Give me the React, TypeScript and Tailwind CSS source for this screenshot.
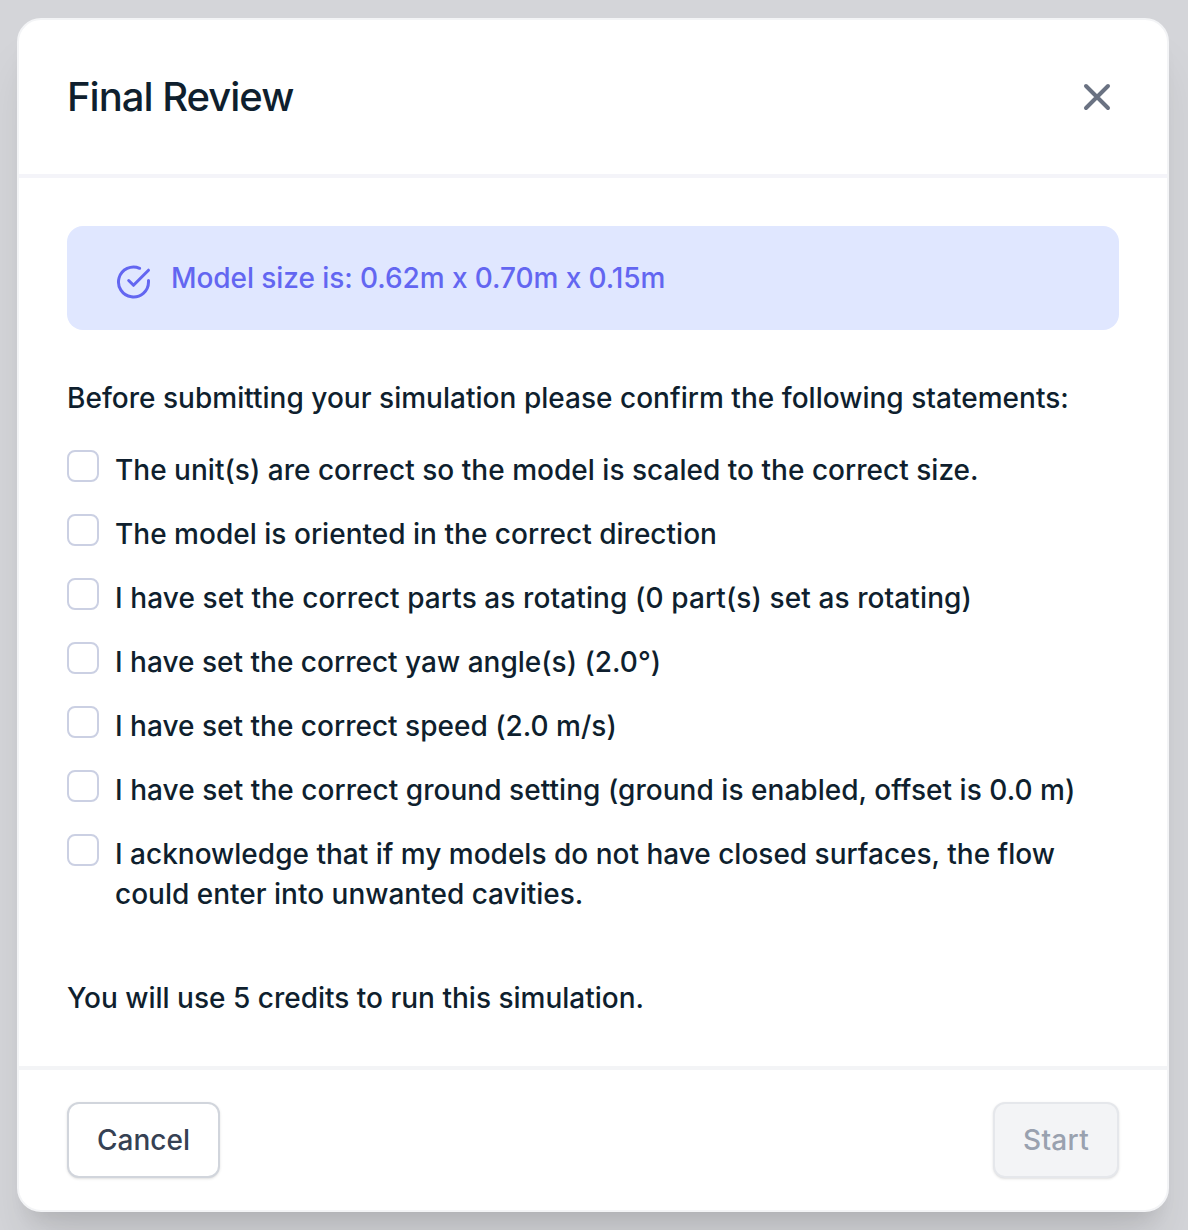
const statements = [
  { text: "The unit(s) are correct so the model is scaled to the correct size.", tracking: "tracking-[0.02px]" },
  { text: "The model is oriented in the correct direction", tracking: "tracking-[0.02px]" },
  { text: "I have set the correct parts as rotating (0 part(s) set as rotating)", tracking: "tracking-[0.1px]" },
  { text: "I have set the correct yaw angle(s) (2.0°)", tracking: "tracking-[0.01px]" },
  { text: "I have set the correct speed (2.0 m/s)", tracking: "tracking-[0.01px]" },
  { text: "I have set the correct ground setting (ground is enabled, offset is 0.0 m)", tracking: "tracking-[0.04px]" },
  {
    text: "I acknowledge that if my models do not have closed surfaces, the flow could enter into unwanted cavities.",
    tracking: "tracking-normal",
  },
];

const Statement = (props: { text: string; tracking: string }) => {
  return (
    <label className="flex items-start gap-4">
      <input
        type="checkbox"
        className="size-8 shrink-0 appearance-none rounded-lg border-2 border-[#cbd0e3] bg-white"
      />
      <span className={`max-w-[980px] leading-10 ${props.tracking}`}>{props.text}</span>
    </label>
  );
};

const App = () => {
  return (
    <div className="h-[1230px] w-[1188px] overflow-hidden bg-[#d4d5d9] px-[17px] pt-[18px] font-['Inter',sans-serif] text-[28px] font-medium tracking-[0.02px] text-[#0f1f2e] [font-variation-settings:'opsz'_14]">
      <section className="flex h-[1194px] w-[1152px] flex-col rounded-3xl border-2 border-[#f3f4f6] bg-white shadow-[0_40px_50px_-10px_rgba(0,0,0,0.1),0_16px_20px_-12px_rgba(0,0,0,0.1)]">
        <header className="flex h-[158px] shrink-0 items-center justify-between border-b-4 border-[#f4f4f9] px-12">
          <h1 className="text-[40px] tracking-[-1px]">Final Review</h1>
          <button aria-label="Close" className="mr-2 text-gray-500">
            <svg width="28" height="28" viewBox="0 0 28 28" fill="none" stroke="currentColor" strokeWidth="4" strokeLinecap="round">
              <path d="M3 3 25 25M25 3 3 25" />
            </svg>
          </button>
        </header>
        <main className="flex-1 px-12 pt-12">
          <div className="flex h-[104px] items-center rounded-2xl bg-[#e0e7ff] pl-12 text-[#6366f1]">
            <svg className="mt-[7px] mr-5" width="36" height="36" viewBox="0 0 36 36" fill="none" stroke="currentColor" strokeWidth="3" strokeLinecap="round" strokeLinejoin="round">
              <path d="M33.5 16.6V18a15 15 0 1 1-8.9-13.7" />
              <path d="m13.7 16.5 4.8 4.8L33.5 6.2" />
            </svg>
            <p className="tracking-[-0.07px]">Model size is: 0.62m x 0.70m x 0.15m</p>
          </div>
          <p className="mt-12 leading-10">
            Before submitting your simulation please confirm the following statements:
          </p>
          <div className="mt-8 flex flex-col gap-6">
            {statements.map((statement) => (
              <Statement key={statement.text} {...statement} />
            ))}
          </div>
          <p className="mt-16 leading-10 tracking-normal">You will use 5 credits to run this simulation.</p>
        </main>
        <footer className="flex h-[144px] shrink-0 items-center justify-between border-t-4 border-gray-100 px-12">
          <button className="h-[76px] w-[153px] rounded-xl border-2 border-gray-300 bg-white text-gray-700 shadow-sm">Cancel</button>
          <button className="h-[76px] w-[126px] rounded-xl border-2 border-gray-200 bg-gray-100 tracking-[0.28px] text-gray-400 shadow-sm">Start</button>
        </footer>
      </section>
    </div>
  );
};

export default App;
